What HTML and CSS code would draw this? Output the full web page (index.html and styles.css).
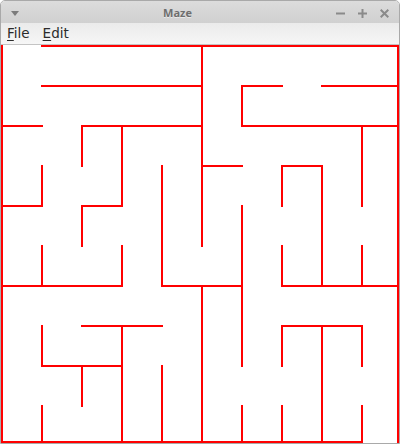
FILE: index.html
```html
<!DOCTYPE html>
<html>
<head>
<meta charset="utf-8">
<link rel="stylesheet" href="styles.css">
</head>
<body>
<div class="window">
  <div class="titlebar">
    <div class="tb-left">
      <svg class="tb-menu" width="8" height="5" viewBox="0 0 8 5"><polygon points="0,0 8,0 4,5" fill="#7c7c7c"/></svg>
    </div>
    <div class="tb-title">Maze</div>
    <div class="tb-right">
      <svg width="9" height="9" viewBox="0 0 9 9"><path d="M0 4.5H9" stroke="#8a8a8a" stroke-width="2"/></svg>
      <svg width="9" height="9" viewBox="0 0 9 9"><path d="M0 4.5H9M4.5 0V9" stroke="#8a8a8a" stroke-width="2"/></svg>
      <svg width="9" height="9" viewBox="0 0 9 9"><path d="M0.7 0.7L8.3 8.3M8.3 0.7L0.7 8.3" stroke="#8a8a8a" stroke-width="2"/></svg>
    </div>
  </div>
  <div class="menubar">
    <span class="menu-item"><u>F</u>ile</span>
    <span class="menu-item"><u>E</u>dit</span>
  </div>
  <div class="panel">
    <svg class="maze" width="398" height="398" viewBox="0 0 398 398">
      <path class="walls" d="
        M41 1H397 M41 41H201 M241 41H281 M321 41H397
        M1 81H41 M81 81H201 M241 81H397
        M201 121H241 M281 121H321
        M1 161H41 M81 161H121
        M1 241H121 M161 241H241 M281 241H397
        M81 281H161 M281 281H361
        M41 321H121
        M1 397H361
        M1 1V397 M397 1V397
        M41 121V161 M41 201V241 M41 281V321 M41 361V397
        M81 81V121 M81 161V201 M81 321V361
        M121 81V161 M121 201V241 M121 281V397
        M161 121V241 M161 321V397
        M201 1V201 M201 241V397
        M241 41V81 M241 161V321 M241 361V397
        M281 121V161 M281 201V241 M281 281V321 M281 361V397
        M321 121V241 M321 281V397
        M361 81V161 M361 201V241 M361 281V321 M361 361V397"/>
    </svg>
  </div>
</div>
</body>
</html>
```
FILE: styles.css
```css
html, body {
  margin: 0;
  padding: 0;
  background: #ffffff;
}
.window {
  width: 400px;
  height: 444px;
  box-sizing: border-box;
  border: 1px solid #a9a9a9;
  border-radius: 5px 5px 0 0;
  overflow: hidden;
  background: #ffffff;
  display: flex;
  flex-direction: column;
}
.titlebar {
  height: 22px;
  flex: none;
  display: grid;
  grid-template-columns: 28px 1fr auto;
  align-items: center;
  background: linear-gradient(#dcdcdc, #d0d0d0);
}
.tb-left {
  display: flex;
  align-items: center;
  padding-left: 10px;
  padding-top: 1px;
}
.tb-menu {
  display: block;
}
.tb-title {
  text-align: center;
  font-family: "Open Sans", "DejaVu Sans", sans-serif;
  font-weight: bold;
  font-size: 11px;
  line-height: 22px;
  padding-top: 1px;
  color: #6e6e6e;
  text-shadow: 0 1px 0 rgba(255,255,255,0.5);
}
.tb-right {
  display: flex;
  align-items: center;
  gap: 13px;
  padding: 1px 10px 0 10px;
}
.tb-right svg {
  display: block;
}
.menubar {
  height: 21px;
  flex: none;
  display: flex;
  gap: 13px;
  padding-left: 6px;
  background: linear-gradient(#ebebeb, #f6f6f6);
  border-bottom: 1px solid #c4c4c4;
  font-family: "DejaVu Sans", sans-serif;
  font-size: 13.5px;
  line-height: 21px;
  color: #2b2b2b;
}
.menu-item u {
  text-decoration-thickness: 1px;
  text-underline-offset: 2px;
}
.panel {
  flex: none;
  width: 398px;
  height: 398px;
  background: #ffffff;
}
.maze {
  display: block;
}
.walls {
  fill: none;
  stroke: #ff0000;
  stroke-width: 2;
  stroke-linecap: square;
}
```
